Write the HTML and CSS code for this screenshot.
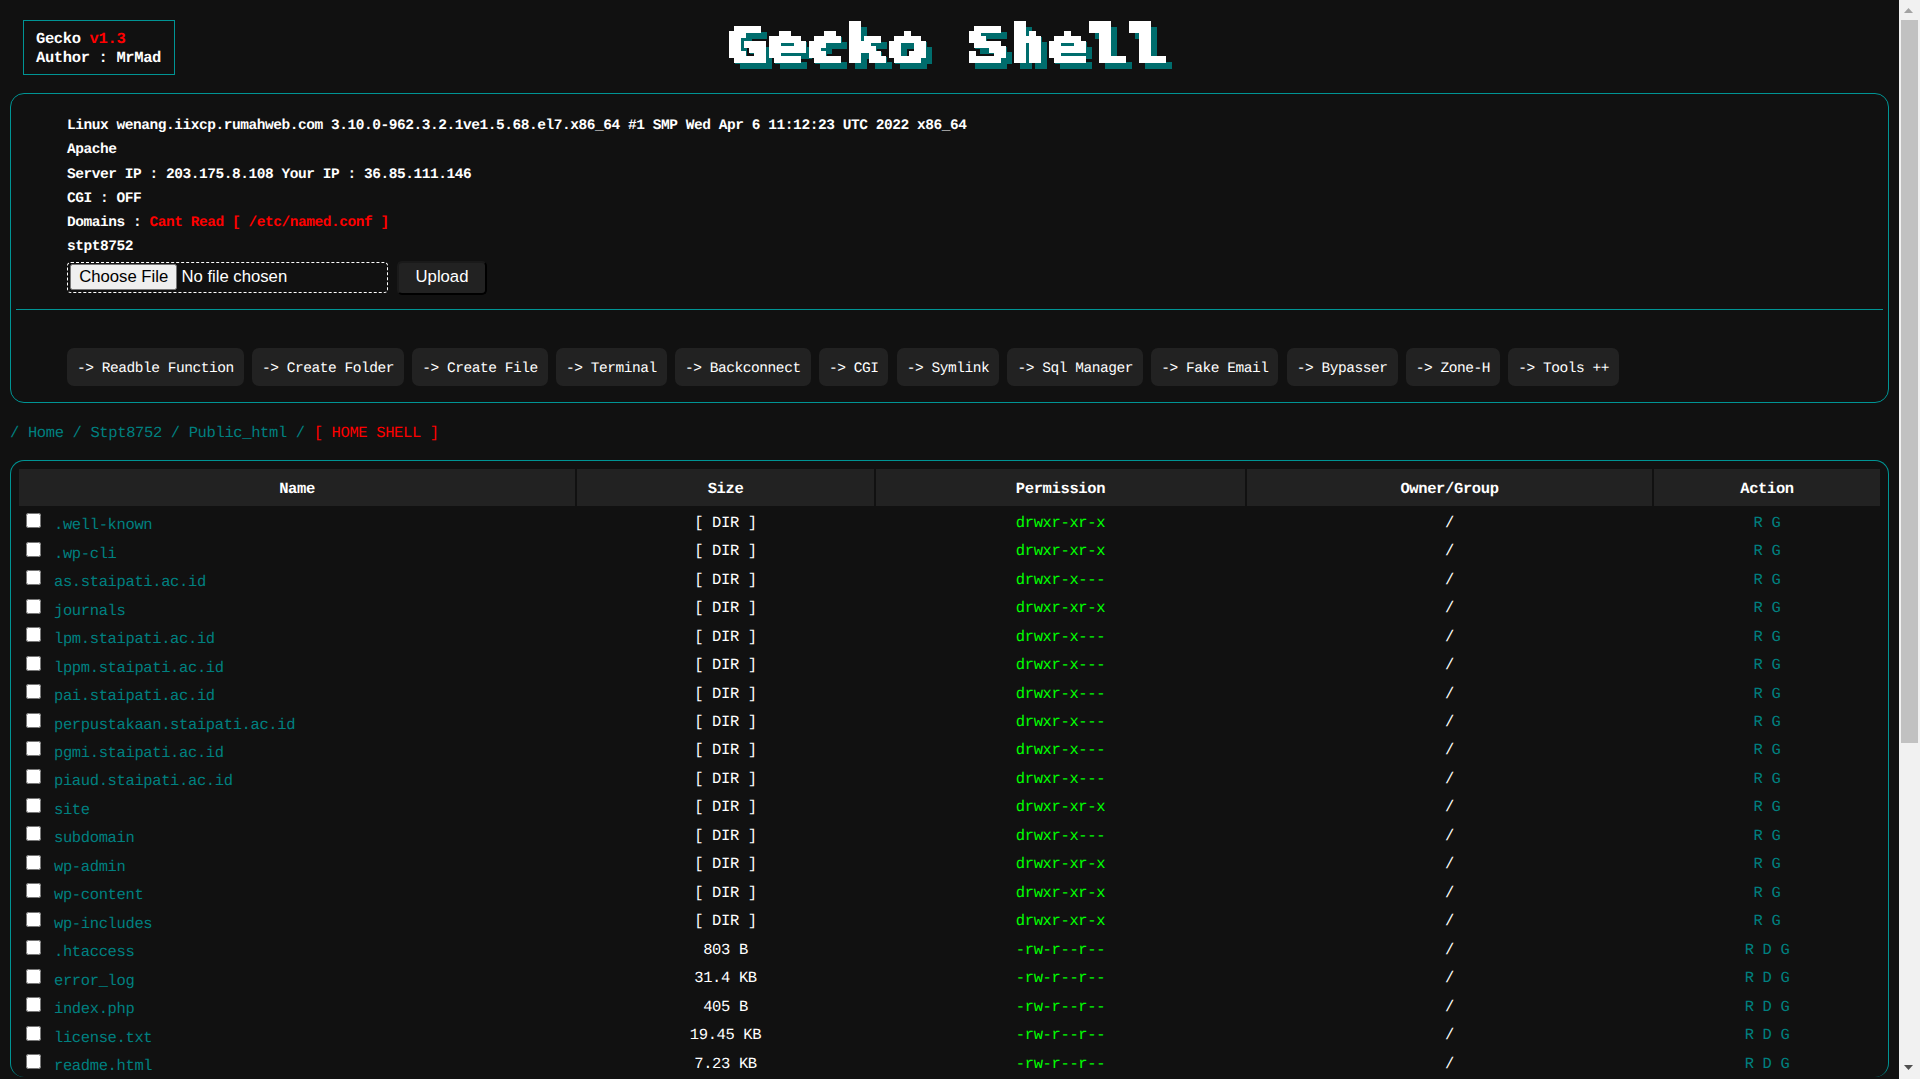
FILE: index.html
```html
<!DOCTYPE html>
<html lang="en">
<head>
<meta charset="utf-8">
<title>Gecko Shell</title>
<link rel="stylesheet" href="styles.css">
</head>
<body>
<svg class="defs" width="0" height="0" aria-hidden="true">
  <filter id="pixelate" x="0" y="0" width="100%" height="100%" color-interpolation-filters="sRGB">
    <feFlood x="2" y="2" width="1" height="1" flood-color="#fff"/>
    <feComposite width="5" height="5"/>
    <feTile result="grid"/>
    <feComposite in="SourceGraphic" in2="grid" operator="in"/>
    <feComponentTransfer><feFuncA type="discrete" tableValues="0 1 1 1"/></feComponentTransfer>
    <feMorphology operator="dilate" radius="2.5" result="pix"/>
    <feOffset in="pix" dx="6" dy="6" result="off"/>
    <feFlood flood-color="#006d6d"/>
    <feComposite in2="off" operator="in" result="shadow"/>
    <feMerge><feMergeNode in="shadow"/><feMergeNode in="pix"/></feMerge>
  </filter>
</svg>
<main class="page">
  <header class="top">
    <div class="badge">Gecko <span class="red">v1.3</span><br>Author : MrMad</div>
    <h1 class="title"><span class="title-text">Gecko Shell</span></h1>
  </header>

  <section class="panel info-panel">
    <div class="info">
      <div>Linux wenang.iixcp.rumahweb.com 3.10.0-962.3.2.1ve1.5.68.el7.x86_64 #1 SMP Wed Apr 6 11:12:23 UTC 2022 x86_64</div>
      <div>Apache</div>
      <div>Server IP : 203.175.8.108 Your IP : 36.85.111.146</div>
      <div>CGI : OFF</div>
      <div>Domains : <span class="red">Cant Read [ /etc/named.conf ]</span></div>
      <div>stpt8752</div>
    </div>
    <form class="upload">
      <input class="file" type="file">
      <button class="submit" type="button">Upload</button>
    </form>
    <hr class="rule">
    <nav class="tools">
      <a class="tool">-&gt; Readble Function</a>
      <a class="tool">-&gt; Create Folder</a>
      <a class="tool">-&gt; Create File</a>
      <a class="tool">-&gt; Terminal</a>
      <a class="tool">-&gt; Backconnect</a>
      <a class="tool">-&gt; CGI</a>
      <a class="tool">-&gt; Symlink</a>
      <a class="tool">-&gt; Sql Manager</a>
      <a class="tool">-&gt; Fake Email</a>
      <a class="tool">-&gt; Bypasser</a>
      <a class="tool">-&gt; Zone-H</a>
      <a class="tool">-&gt; Tools ++</a>
    </nav>
  </section>

  <div class="crumbs">/ <a>Home</a> / <a>Stpt8752</a> / <a>Public_html</a> / <span class="red">[ HOME SHELL ]</span></div>

  <section class="panel files-panel">
    <table class="files">
      <colgroup><col class="c1"><col class="c2"><col class="c3"><col class="c4"><col class="c5"></colgroup>
      <thead><tr><th>Name</th><th>Size</th><th>Permission</th><th>Owner/Group</th><th>Action</th></tr></thead>
      <tbody>
        <tr><td class="name"><input type="checkbox"><a>.well-known</a></td><td>[ DIR ]</td><td class="perm">drwxr-xr-x</td><td>/</td><td class="act">R G</td></tr>
        <tr><td class="name"><input type="checkbox"><a>.wp-cli</a></td><td>[ DIR ]</td><td class="perm">drwxr-xr-x</td><td>/</td><td class="act">R G</td></tr>
        <tr><td class="name"><input type="checkbox"><a>as.staipati.ac.id</a></td><td>[ DIR ]</td><td class="perm">drwxr-x---</td><td>/</td><td class="act">R G</td></tr>
        <tr><td class="name"><input type="checkbox"><a>journals</a></td><td>[ DIR ]</td><td class="perm">drwxr-xr-x</td><td>/</td><td class="act">R G</td></tr>
        <tr><td class="name"><input type="checkbox"><a>lpm.staipati.ac.id</a></td><td>[ DIR ]</td><td class="perm">drwxr-x---</td><td>/</td><td class="act">R G</td></tr>
        <tr><td class="name"><input type="checkbox"><a>lppm.staipati.ac.id</a></td><td>[ DIR ]</td><td class="perm">drwxr-x---</td><td>/</td><td class="act">R G</td></tr>
        <tr><td class="name"><input type="checkbox"><a>pai.staipati.ac.id</a></td><td>[ DIR ]</td><td class="perm">drwxr-x---</td><td>/</td><td class="act">R G</td></tr>
        <tr><td class="name"><input type="checkbox"><a>perpustakaan.staipati.ac.id</a></td><td>[ DIR ]</td><td class="perm">drwxr-x---</td><td>/</td><td class="act">R G</td></tr>
        <tr><td class="name"><input type="checkbox"><a>pgmi.staipati.ac.id</a></td><td>[ DIR ]</td><td class="perm">drwxr-x---</td><td>/</td><td class="act">R G</td></tr>
        <tr><td class="name"><input type="checkbox"><a>piaud.staipati.ac.id</a></td><td>[ DIR ]</td><td class="perm">drwxr-x---</td><td>/</td><td class="act">R G</td></tr>
        <tr><td class="name"><input type="checkbox"><a>site</a></td><td>[ DIR ]</td><td class="perm">drwxr-xr-x</td><td>/</td><td class="act">R G</td></tr>
        <tr><td class="name"><input type="checkbox"><a>subdomain</a></td><td>[ DIR ]</td><td class="perm">drwxr-x---</td><td>/</td><td class="act">R G</td></tr>
        <tr><td class="name"><input type="checkbox"><a>wp-admin</a></td><td>[ DIR ]</td><td class="perm">drwxr-xr-x</td><td>/</td><td class="act">R G</td></tr>
        <tr><td class="name"><input type="checkbox"><a>wp-content</a></td><td>[ DIR ]</td><td class="perm">drwxr-xr-x</td><td>/</td><td class="act">R G</td></tr>
        <tr><td class="name"><input type="checkbox"><a>wp-includes</a></td><td>[ DIR ]</td><td class="perm">drwxr-xr-x</td><td>/</td><td class="act">R G</td></tr>
        <tr><td class="name"><input type="checkbox"><a>.htaccess</a></td><td>803 B</td><td class="perm">-rw-r--r--</td><td>/</td><td class="act">R D G</td></tr>
        <tr><td class="name"><input type="checkbox"><a>error_log</a></td><td>31.4 KB</td><td class="perm">-rw-r--r--</td><td>/</td><td class="act">R D G</td></tr>
        <tr><td class="name"><input type="checkbox"><a>index.php</a></td><td>405 B</td><td class="perm">-rw-r--r--</td><td>/</td><td class="act">R D G</td></tr>
        <tr><td class="name"><input type="checkbox"><a>license.txt</a></td><td>19.45 KB</td><td class="perm">-rw-r--r--</td><td>/</td><td class="act">R D G</td></tr>
        <tr><td class="name"><input type="checkbox"><a>readme.html</a></td><td>7.23 KB</td><td class="perm">-rw-r--r--</td><td>/</td><td class="act">R D G</td></tr>
      </tbody>
    </table>
  </section>
</main>
<aside class="scrollbar" aria-hidden="true">
  <svg class="arrow" width="21" height="20" viewBox="0 0 21 20"><path d="M5 13 9.5 8 14 13Z" fill="#a3a3a3"/></svg>
  <div class="thumb"></div>
  <svg class="arrow" width="21" height="20" viewBox="0 0 21 20"><path d="M5 6 9.5 11 14 6Z" fill="#505050"/></svg>
</aside>
</body>
</html>
```
FILE: styles.css
```css
* { box-sizing: border-box; }
html, body { height: 100%; }
body {
  margin: 0;
  display: flex;
  height: 1079px;
  overflow: hidden;
  background: #111;
  color: #fff;
  font-family: "Liberation Mono", "DejaVu Sans Mono", monospace;
  font-size: 15.5px;
  letter-spacing: -0.37px;
  text-rendering: geometricPrecision;
}
.defs { position: absolute; }
.red { color: #f00; }
.page {
  flex: 1;
  min-width: 0;
  height: 1079px;
  overflow: hidden;
  padding: 0 10px;
}
.top {
  position: relative;
  height: 93px;
  display: flex;
  justify-content: center;
}
.badge {
  position: absolute;
  left: 13px;
  top: 20px;
  width: 152px;
  height: 55px;
  padding: 9px 12px;
  border: 1px solid #009494;
  font-weight: 700;
  line-height: 19px;
}
.title {
  margin: 7px 0 0;
  width: 480px;
  height: 80px;
  padding-right: 5px;
  font: 700 51px/80px "DejaVu Sans Mono", monospace;
  letter-spacing: 0;
  color: #fff;
  text-align: center;
  filter: url(#pixelate);
  white-space: nowrap;
}
.title-text {
  display: inline-block;
  transform: scaleX(1.31);
}
.panel {
  border: 1px solid #009494;
  border-radius: 14px;
}
.info-panel { height: 310px; padding: 20px 5px 0; }
.info {
  padding-left: 51px;
  font-size: 14.5px;
  letter-spacing: -0.45px;
  font-weight: 700;
  line-height: 24.3px;
}
.upload {
  display: flex;
  align-items: center;
  gap: 9px;
  padding-left: 51px;
  margin-top: 1px;
  height: 34px;
}
.file {
  width: 321px;
  height: 31px;
  padding: 1px 2px;
  border: 1px dashed #fff;
  border-radius: 4px;
  color: #fff;
  letter-spacing: 0;
  font: 16.7px "Liberation Sans", Arial, sans-serif;
}
.file::file-selector-button {
  padding: 1px 7.2px;
}
.submit {
  width: 90px;
  height: 34px;
  padding: 0 0 2px;
  background: #222;
  color: #fff;
  border: 2px solid #1a1a1a;
  border-right-color: #000;
  border-bottom-color: #000;
  border-radius: 5px;
  letter-spacing: 0;
  font: 16.7px "Liberation Sans", Arial, sans-serif;
}
.rule {
  margin: 14px 0 0;
  border: 0;
  height: 1px;
  background: #009494;
}
.tools {
  display: flex;
  gap: 8.25px;
  padding: 38px 0 0 51px;
}
.tool {
  display: flex;
  align-items: center;
  height: 38px;
  padding: 4px 10px 0;
  background: #222;
  border-radius: 7px;
  font-size: 14.5px;
  letter-spacing: -0.45px;
  white-space: nowrap;
}
.crumbs {
  margin-top: 20px;
  height: 37px;
  line-height: 20px;
  color: #008080;
}
.crumbs .red { color: #f00; }
.files-panel {
  border-bottom: 0;
  padding: 6px 6px 0;
}
.files {
  width: 100%;
  table-layout: fixed;
  border-collapse: separate;
  border-spacing: 2px;
}
.c1 { width: 556px; }
.c2 { width: 297px; }
.c3 { width: 369px; }
.c4 { width: 405px; }
.files th {
  height: 37px;
  padding: 2px 0 0;
  background: #222;
  font-weight: 700;
}
.files td {
  height: 26.47px;
  padding: 3px 0 0;
  text-align: center;
  line-height: 20px;
}
.files td.name {
  text-align: left;
  padding: 4px 0 0 3px;
  line-height: 16px;
}
.name input {
  width: 15px;
  height: 15px;
  margin: 0 13px 0 4px;
  vertical-align: 1px;
}
.name a, .act { color: #008080; }
.perm { color: #0f0; }
.scrollbar {
  width: 21px;
  flex: none;
  height: 1079px;
  background: #f1f1f1;
  display: flex;
  flex-direction: column;
}
.arrow { display: block; flex: none; }
.thumb {
  height: 723px;
  margin: 0 2px;
  background: #c1c1c1;
}
.scrollbar .arrow:last-child { margin-top: auto; }
```
